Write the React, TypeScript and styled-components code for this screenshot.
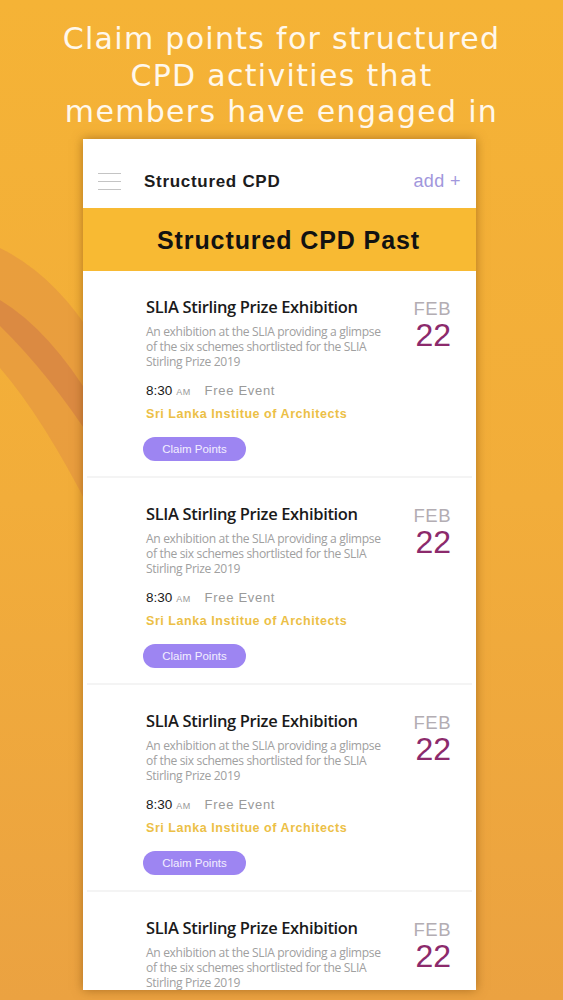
import React from "react";
import styled, { createGlobalStyle } from "styled-components";

const Global = createGlobalStyle`
  html, body { margin: 0; padding: 0; }
  body { width: 563px; height: 1000px; overflow: hidden; font-family: "Liberation Sans", Arial, sans-serif; }
`;

const Page = styled.div`
  position: relative;
  width: 563px;
  height: 1000px;
  overflow: hidden;
  background: linear-gradient(180deg, #f5b336 0%, #f2ad3a 50%, #eba241 100%);
  display: flex;
  flex-direction: column;
  align-items: flex-start;
`;

const Decoration = styled.svg`
  position: absolute;
  left: 0;
  top: 0;
  width: 563px;
  height: 1000px;
  pointer-events: none;
`;

const Headline = styled.h1`
  position: relative;
  margin: 21px 0 0 0;
  width: 563px;
  text-align: center;
  color: #fff8ec;
  font-family: "DejaVu Sans", sans-serif;
  font-weight: 400;
  font-size: 30px;
  line-height: 36.5px;
  letter-spacing: 1.3px;
`;

const Card = styled.div`
  position: relative;
  margin: 8px 0 0 83px;
  width: 393px;
  height: 851px;
  background: #ffffff;
  overflow: hidden;
  box-shadow: 0 0 10px rgba(120, 70, 10, 0.55);
  display: flex;
  flex-direction: column;
`;

const TopBar = styled.div`
  height: 69px;
  flex: none;
  display: flex;
  align-items: center;
  padding: 17px 15px 0 15px;
  box-sizing: border-box;
`;

const Burger = styled.div`
  width: 23px;
  display: flex;
  flex-direction: column;
  gap: 6.5px;
  margin-right: 23px;
  & > span {
    display: block;
    height: 1.5px;
    background: #c4c4c4;
  }
`;

const BarTitle = styled.div`
  flex: 1;
  font-family: "Liberation Sans", Arial, sans-serif;
  font-weight: 700;
  font-size: 17px;
  letter-spacing: 0.7px;
  color: #1c1c1c;
`;

const AddLink = styled.div`
  font-family: "Liberation Sans", Arial, sans-serif;
  font-size: 18px;
  color: #a197dc;
  letter-spacing: 0.4px;
`;

const Band = styled.div`
  height: 63px;
  flex: none;
  background: #f8ba33;
  display: flex;
  align-items: center;
  justify-content: center;
  font-family: "Liberation Sans", Arial, sans-serif;
  font-weight: 700;
  font-size: 25px;
  letter-spacing: 0.9px;
  color: #121212;
  padding-left: 18px;
  padding-top: 2px;
  box-sizing: border-box;
`;

const Item = styled.div`
  flex: none;
  height: 207px;
  margin: 0 4px;
  border-bottom: 2px solid #f4f4f4;
  display: flex;
  padding: 26px 21px 0 59px;
  box-sizing: border-box;
`;

const Body = styled.div`
  flex: 1;
  display: flex;
  flex-direction: column;
  align-items: flex-start;
`;

const Title = styled.div`
  font-family: "Open Sans", sans-serif;
  font-weight: 600;
  font-size: 16.5px;
  line-height: 20px;
  letter-spacing: -0.35px;
  color: #1a1a1a;
`;

const Desc = styled.div`
  margin-top: 7px;
  width: 240px;
  font-family: "Open Sans", sans-serif;
  font-size: 12.1px;
  line-height: 15px;
  letter-spacing: -0.35px;
  color: #a0a0a0;
`;

const TimeRow = styled.div`
  margin-top: 13px;
  display: flex;
  align-items: baseline;
  line-height: 18px;
  font-family: "Liberation Sans", Arial, sans-serif;
`;

const Time = styled.span`
  font-size: 13.5px;
  color: #1a1a1a;
`;

const Meridiem = styled.span`
  font-size: 9px;
  color: #999;
  margin-left: 4px;
  letter-spacing: 0.4px;
`;

const Price = styled.span`
  font-size: 13px;
  color: #9a9a9a;
  margin-left: 14px;
  letter-spacing: 0.7px;
`;

const Org = styled.div`
  margin-top: 5px;
  font-family: "Liberation Sans", Arial, sans-serif;
  font-weight: 700;
  font-size: 12.5px;
  line-height: 16px;
  letter-spacing: 0.55px;
  color: #ecc046;
`;

const ClaimButton = styled.button`
  margin-top: 15px;
  margin-left: -3px;
  width: 103px;
  height: 24px;
  border: none;
  border-radius: 12px;
  background: #9d85f2;
  color: #f3efff;
  font-family: "Liberation Sans", Arial, sans-serif;
  font-size: 11.5px;
  padding: 0;
  cursor: pointer;
`;

const DateCol = styled.div`
  width: 36px;
  display: flex;
  flex-direction: column;
  align-items: flex-end;
  margin-top: 2px;
`;

const Month = styled.div`
  font-family: "Liberation Sans", Arial, sans-serif;
  font-size: 18.5px;
  line-height: 19px;
  color: #b3adb3;
  letter-spacing: 0.5px;
`;

const Day = styled.div`
  font-family: "Liberation Sans", Arial, sans-serif;
  font-size: 32px;
  line-height: 30px;
  color: #8c2a6c;
  margin-top: 2px;
`;

type Event = {
  title: string;
  desc: string;
  time: string;
  price: string;
  org: string;
  month: string;
  day: string;
};

const ev: Event = {
  title: "SLIA Stirling Prize Exhibition",
  desc: "An exhibition at the SLIA providing a glimpse of the six schemes shortlisted for the SLIA Stirling Prize 2019",
  time: "8:30",
  price: "Free Event",
  org: "Sri Lanka Institue of Architects",
  month: "FEB",
  day: "22",
};

const events: Event[] = [ev, ev, ev, ev];

export default function App() {
  return (
    <>
      <Global />
      <Page>
        <Decoration viewBox="0 0 563 1000">
          <path d="M0,248 Q55,275 95,340 L95,520 Q45,420 0,368 Z" fill="#e49540" opacity="0.65" />
          <path d="M0,300 Q50,330 95,405 L95,445 Q50,375 0,326 Z" fill="#d47f45" opacity="0.65" />
        </Decoration>
        <Headline>
          Claim points for structured
          <br />
          CPD activities that
          <br />
          members have engaged in
        </Headline>
        <Card>
          <TopBar>
            <Burger>
              <span />
              <span />
              <span />
            </Burger>
            <BarTitle>Structured CPD</BarTitle>
            <AddLink>add +</AddLink>
          </TopBar>
          <Band>Structured CPD Past</Band>
          {events.map((e, i) => (
            <Item key={i}>
              <Body>
                <Title>{e.title}</Title>
                <Desc>{e.desc}</Desc>
                <TimeRow>
                  <Time>{e.time}</Time>
                  <Meridiem>AM</Meridiem>
                  <Price>{e.price}</Price>
                </TimeRow>
                <Org>{e.org}</Org>
                <ClaimButton>Claim Points</ClaimButton>
              </Body>
              <DateCol>
                <Month>{e.month}</Month>
                <Day>{e.day}</Day>
              </DateCol>
            </Item>
          ))}
        </Card>
      </Page>
    </>
  );
}
